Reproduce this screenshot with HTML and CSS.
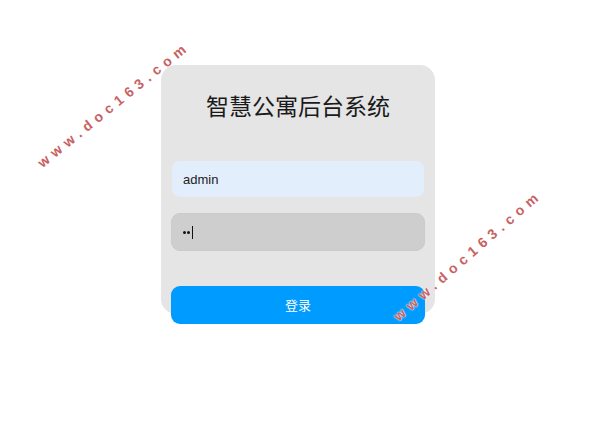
FILE: index.html
```html
<!DOCTYPE html>
<html>
<head>
<meta charset="utf-8">
<link rel="stylesheet" href="styles.css">
</head>
<body>
<div class="page">
  <div class="card">
    <h1 class="title">智慧公寓后台系统</h1>
    <div class="field user">admin</div>
    <div class="field pass"><span class="dot"></span><span class="dot"></span><span class="caret"></span></div>
    <div class="btn">登录</div>
  </div>
</div>
<div class="wm wm1">www.doc163.com</div>
<div class="wm wm2">www.doc163.com</div>
</body>
</html>
```
FILE: styles.css
```css
html, body {
  margin: 0;
  padding: 0;
  background: #ffffff;
  font-family: "Liberation Sans", Arial, "Noto Sans CJK SC", sans-serif;
}
body {
  min-height: 100vh;
}
.page {
  padding: 65px 0 0 161px;
}
.card {
  box-sizing: border-box;
  display: flow-root;
  width: 274px;
  background: #e5e5e5;
  border-radius: 15px;
  padding: 25px 10px 0 10px;
}
.title {
  margin: 0;
  font-family: "Noto Sans CJK SC", sans-serif;
  font-weight: 400;
  font-size: 23px;
  line-height: 30px;
  height: 30px;
  text-align: center;
  color: #1a1a1a;
}
.field {
  box-sizing: border-box;
  display: flex;
  align-items: center;
  padding-left: 11px;
  font-size: 13px;
  color: #222;
}
.user {
  margin: 41px 1px 0 1px;
  height: 36px;
  background: #e3eefc;
  border-radius: 8px;
}
.pass {
  margin-top: 16px;
  height: 38px;
  background: #cecece;
  border: 1px solid #cbcbcb;
  border-radius: 9px;
  gap: 1px;
}
.dot {
  width: 3px;
  height: 3px;
  border-radius: 50%;
  background: #111;
}
.caret {
  width: 1px;
  height: 13px;
  background: #111;
  margin-left: 1px;
}
.btn {
  position: relative;
  margin-top: 35px;
  margin-bottom: -10px;
  height: 38px;
  background: #009bff;
  border-radius: 9px;
  color: #ffffff;
  font-family: "Noto Sans CJK SC", sans-serif;
  font-size: 13px;
  line-height: 38px;
  text-align: center;
}
.wm {
  position: absolute;
  z-index: 2;
  font-family: "Liberation Sans", Arial, sans-serif;
  font-weight: bold;
  font-size: 14px;
  line-height: 16px;
  letter-spacing: 5.3px;
  color: #c86262;
  white-space: nowrap;
  width: 192px;
  transform-origin: center center;
  text-shadow: 0 0 1px #fff;
}
.wm1 {
  left: 18px;
  top: 96px;
  transform: rotate(-39deg);
}
.wm2 {
  left: 372px;
  top: 247px;
  transform: rotate(-41deg);
  text-shadow: 0 0 2px #fff, 0 0 1px #fff;
}
```
